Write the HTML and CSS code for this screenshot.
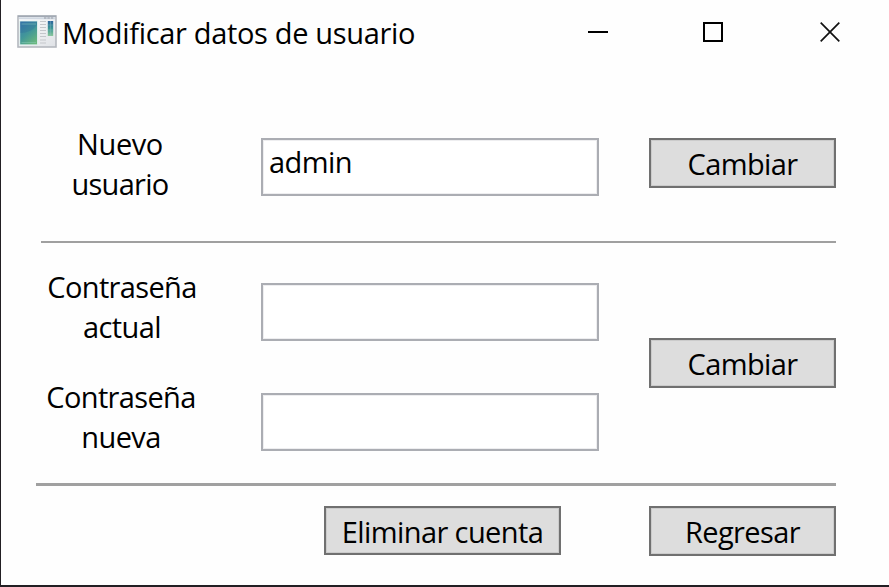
FILE: index.html
```html
<!DOCTYPE html>
<html lang="es">
<head>
<meta charset="utf-8">
<title>Modificar datos de usuario</title>
<link rel="stylesheet" href="styles.css">
</head>
<body>
<main class="window">
  <header class="titlebar">
    <svg class="app-icon" width="40" height="34" viewBox="0 0 40 34">
      <defs>
        <linearGradient id="frame" x1="0" y1="0" x2="1" y2="1"><stop offset="0" stop-color="#fff"/><stop offset="1" stop-color="#dfe2e6"/></linearGradient>
        <linearGradient id="pane" x1="0.2" y1="0" x2="0.8" y2="1"><stop offset="0" stop-color="#397cab"/><stop offset=".5" stop-color="#429799"/><stop offset="1" stop-color="#6bb87c"/></linearGradient>
        <linearGradient id="strip" x1="0" y1="0" x2="0" y2="1"><stop offset="0" stop-color="#2d659d"/><stop offset=".5" stop-color="#3c9795"/><stop offset="1" stop-color="#8bc79a"/></linearGradient>
      </defs>
      <rect x="1" y="1" width="38" height="31" fill="url(#frame)" stroke="#b4b8bf" stroke-width="1.6"/>
      <path d="M1 1.2H39" stroke="#a2a9b4" stroke-width="1.4"/>
      <path d="M2 3.2H38" stroke="#d0d8e2" stroke-width="2"/>
      <path d="M27 3H37" stroke="#a9b0b9" stroke-width="1.4" stroke-dasharray="2.4 1"/>
      <rect x="2.4" y="5.7" width="18.4" height="24.4" fill="#d7ece9"/>
      <rect x="3.2" y="6.5" width="16.8" height="22.8" fill="url(#pane)"/>
      <path d="M3.2 18Q14 18 20 10V6.5H3.2Z" fill="#285f99" opacity=".25"/>
      <path d="M4.5 9H19M4.5 27.6H19" stroke="#8ed0c0" stroke-width=".7" opacity=".7"/>
      <path d="M23 6.5H29M23 9.5H29M23 12.5H29M23 15.5H29M23 18.5H29M23 21.5H29M23 25H29M23 28H29" stroke="#c4c7cb" stroke-width="1"/>
      <rect x="30.8" y="6" width="5.4" height="15" fill="url(#strip)"/>
      <path d="M33.5 6V21M30.8 10H36.2M30.8 15H36.2" stroke="#8fbfc4" stroke-width=".6" opacity=".6"/>
    </svg>
    <h1 class="title">Modificar datos de usuario</h1>
    <div class="controls">
      <svg width="20" height="20" viewBox="0 0 20 20"><path d="M0 10H20" stroke="#000" stroke-width="2"/></svg>
      <svg width="20" height="20" viewBox="0 0 20 20"><rect x="1" y="1" width="18" height="18" fill="none" stroke="#000" stroke-width="2"/></svg>
      <svg width="20" height="20" viewBox="0 0 20 20"><path d="M.7.7 19.3 19.3M19.3.7.7 19.3" fill="none" stroke="#111" stroke-width="1.7"/></svg>
    </div>
  </header>

  <section class="section user">
    <div class="label"><span class="t-nuevo">Nuevo</span><span class="t-usuario">usuario</span></div>
    <div class="field"><span class="t-admin">admin</span></div>
    <div class="button"><span class="t-cambiar">Cambiar</span></div>
  </section>

  <div class="rule"></div>

  <section class="section password">
    <div class="rows">
      <div class="row">
        <div class="label current"><span class="t-contra">Contraseña</span><span class="t-actual">actual</span></div>
        <div class="field"></div>
      </div>
      <div class="row">
        <div class="label new"><span class="t-contra">Contraseña</span><span class="t-nueva">nueva</span></div>
        <div class="field"></div>
      </div>
    </div>
    <div class="button"><span class="t-cambiar">Cambiar</span></div>
  </section>

  <div class="rule thick"></div>

  <footer class="actions">
    <div class="button wide"><span class="t-eliminar">Eliminar cuenta</span></div>
    <div class="button"><span class="t-regresar">Regresar</span></div>
  </footer>
</main>
</body>
</html>
```
FILE: styles.css
```css
* { box-sizing: border-box; }
body { margin: 0; background: #fefefe; }
.window {
  width: 889px;
  height: 587px;
  overflow: hidden;
  border-left: 1px solid #221f23;
  border-bottom: 2px solid #221f23;
  background: #fefefe;
  color: #000;
  font: 400 29px/40px "Open Sans", "Noto Sans", sans-serif;
}
.titlebar { display: flex; height: 64px; padding: 13px 49px 0 16px; }
.app-icon { margin-top: 2px; flex: none; }
.title { margin: 0 0 0 5px; font: inherit; letter-spacing: -.33px; white-space: nowrap; }
.controls { display: flex; justify-content: space-between; width: 252px; margin: 9px 0 0 auto; flex: none; }
.controls svg:nth-child(2) { margin-right: 2px; }
.section { display: flex; padding: 0 53px 0 40px; }
.user { height: 177px; padding-top: 60px; }
.password { height: 240px; padding-top: 24px; }
.row { display: flex; height: 80px; }
.row + .row { margin-top: 30px; }
.label { display: flex; flex-direction: column; align-items: center; width: 158px; height: 80px; flex: none; }
.current { width: 162px; }
.new { width: 160px; }
.field {
  width: 338px;
  height: 58px;
  margin: 16px 0 0 auto;
  padding: 2px 0 0 6px;
  border: 2px solid #abadb3;
  box-shadow: inset 0 0 0 1px #eeeef0;
  background: #fff;
  flex: none;
}
.rows { width: 558px; flex: none; }
.user .field { margin: 14px 0 0 62px; }
.button {
  display: flex;
  justify-content: center;
  width: 187px;
  height: 50px;
  padding-top: 4px;
  border: 2px solid #707070;
  box-shadow: inset 0 0 0 1px #cbcbcb;
  background: #ddd;
  flex: none;
}
.section .button { margin-left: auto; }
.user .button { margin-top: 14px; }
.password .button { margin-top: 71px; }
.rule { height: 2px; margin: 0 53px 0 40px; background: #a0a0a0; }
.rule.thick { height: 3px; margin-left: 35px; }
.actions { display: flex; justify-content: flex-end; gap: 88px; padding: 20px 53px 0 0; }
.button.wide { width: 237px; height: 49px; }
span { white-space: nowrap; letter-spacing: -.6px; }
.t-nuevo { letter-spacing: -.4px; }
.t-usuario { letter-spacing: -.7px; }
.t-contra { letter-spacing: -.65px; }
```
